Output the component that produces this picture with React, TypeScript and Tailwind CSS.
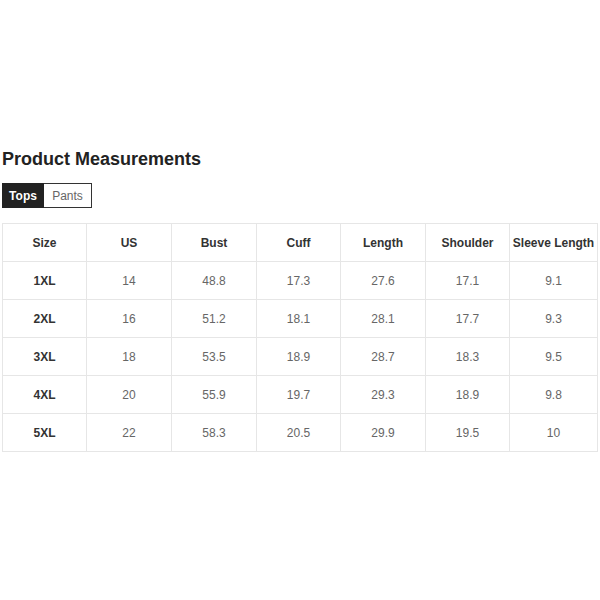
const headers = ['Size', 'US', 'Bust', 'Cuff', 'Length', 'Shoulder', 'Sleeve Length'];

const rows = [
  ['1XL', '14', '48.8', '17.3', '27.6', '17.1', '9.1'],
  ['2XL', '16', '51.2', '18.1', '28.1', '17.7', '9.3'],
  ['3XL', '18', '53.5', '18.9', '28.7', '18.3', '9.5'],
  ['4XL', '20', '55.9', '19.7', '29.3', '18.9', '9.8'],
  ['5XL', '22', '58.3', '20.5', '29.9', '19.5', '10'],
];

export default function App() {
  return (
    <div className="h-[600px] w-[600px] bg-white px-[2px] pt-[148px] font-['Liberation_Sans',Arial,sans-serif]">
      <h2 className="text-[18px] font-bold leading-[22px] text-[#222]">Product Measurements</h2>

      <div className="mt-[13px] flex">
        <button className="h-[25px] w-[42px] border border-[#222] bg-[#222] text-[12px] font-bold text-white">Tops</button>
        <button className="h-[25px] w-[48px] border border-l-0 border-[#333] bg-white text-[12px] text-[#666]">Pants</button>
      </div>

      <table className="mt-[15px] w-[596px] table-fixed border-collapse text-center text-[12px]">
        <colgroup>
          <col className="w-[84px]" />
          <col className="w-[85px]" />
          <col className="w-[85px]" />
          <col className="w-[84px]" />
          <col className="w-[85px]" />
          <col className="w-[84px]" />
          <col />
        </colgroup>
        <thead>
          <tr className="h-[38px]">
            {headers.map((h) => (
              <th key={h} className="border border-[#e6e6e6] font-bold text-[#333]">
                {h}
              </th>
            ))}
          </tr>
        </thead>
        <tbody>
          {rows.map((r) => (
            <tr key={r[0]} className="h-[38px]">
              {r.map((v, i) => (
                <td
                  key={i}
                  className={
                    i === 0
                      ? 'border border-[#e6e6e6] font-bold text-[#333]'
                      : 'border border-[#e6e6e6] text-[#666]'
                  }
                >
                  {v}
                </td>
              ))}
            </tr>
          ))}
        </tbody>
      </table>
    </div>
  );
}
